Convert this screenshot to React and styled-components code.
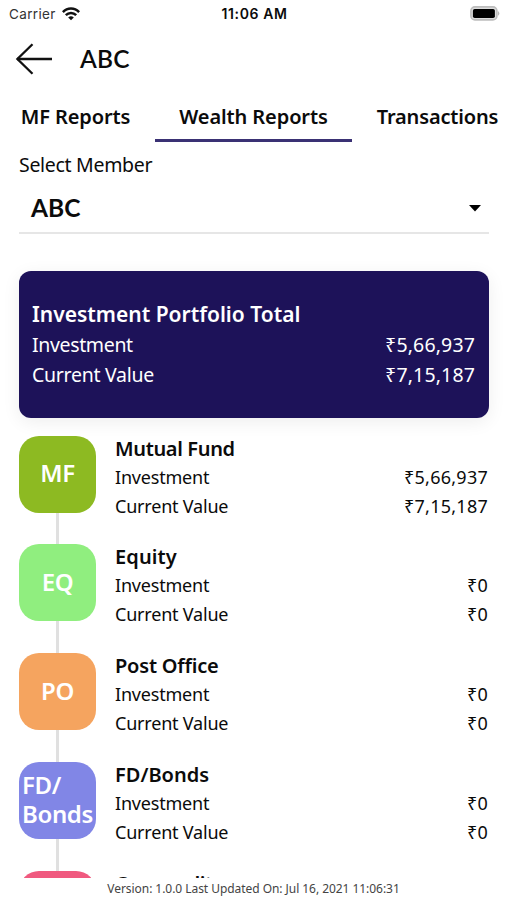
import React from 'react';
import styled, { createGlobalStyle } from 'styled-components';

const GlobalStyle = createGlobalStyle`
  *, *::before, *::after { box-sizing: border-box; }
  body { margin: 0; background: #fff; }
`;

const Screen = styled.main`
  width: 507px;
  height: 900px;
  display: flex;
  flex-direction: column;
  overflow: hidden;
  background: #fff;
  color: #0b0b0b;
  font-family: 'Noto Sans', 'Open Sans', sans-serif;
`;

const Text = styled.span`
  display: block;
  white-space: pre;
  font-size: ${(p) => p.$size}px;
  font-weight: ${(p) => p.$weight || 400};
  letter-spacing: ${(p) => p.$track || 0}px;
  line-height: ${(p) => p.$line}px;
`;

const StatusBar = styled.header`
  height: 28px;
  flex: none;
  display: grid;
  grid-template-columns: 1fr auto 1fr;
  align-items: center;
  padding: 0 7px 1px 9px;
  font-family: Inter, sans-serif;
`;

const Carrier = styled.div`
  display: flex;
  align-items: center;
  gap: 6px;
  color: #333;
`;

const BatteryIcon = styled.svg`
  justify-self: end;
`;

const TitleBar = styled.div`
  height: 62px;
  flex: none;
  display: flex;
  align-items: center;
  gap: 27px;
  padding-left: 15px;
`;

const LatoText = styled(Text)`
  font-family: Lato, sans-serif;
`;

const Tabs = styled.nav`
  height: 52px;
  flex: none;
  display: flex;
  margin-left: -4px;
`;

const Tab = styled.button`
  flex: none;
  width: ${(p) => p.$width}px;
  display: flex;
  justify-content: center;
  padding: 13px 0 0;
  border: 0;
  border-bottom: 3px solid ${(p) => (p.$active ? '#3a3174' : 'transparent')};
  background: none;
  font: inherit;
  color: inherit;
`;

const Member = styled.section`
  flex: none;
  height: 92px;
  margin: 0 18px 0 19px;
  padding-top: 9px;
  border-bottom: 2px solid #e6e6e6;
`;

const Select = styled.div`
  display: flex;
  align-items: center;
  justify-content: space-between;
  padding: 14px 8px 0 12px;
`;

const TotalCard = styled.section`
  flex: none;
  height: 147px;
  margin: 36.5px 18px 0 19px;
  padding: 27px 14px 0 13px;
  border-radius: 12px;
  background: #1d1259;
  color: #fff;
  box-shadow: 0 4px 18px rgba(0, 0, 0, 0.07);
`;

const Row = styled.div`
  display: flex;
  justify-content: space-between;
`;

const List = styled.ul`
  flex: none;
  height: 442.3px;
  margin: 18.2px 0 0;
  padding: 0 19px;
  overflow: hidden;
  list-style: none;
`;

const Item = styled.li`
  display: grid;
  grid-template-columns: 77px 1fr;
  column-gap: 19px;
  height: 108.75px;
`;

const Rail = styled.div`
  display: flex;
  flex-direction: column;
  align-items: center;
`;

const Details = styled.div`
  margin-top: -1.1px;
`;

const Badge = styled.div`
  flex: none;
  width: 77px;
  height: 77px;
  display: flex;
  align-items: center;
  justify-content: center;
  padding-bottom: 3px;
  border-radius: 20px;
  background: ${(p) => p.$color};
  color: #fff;
`;

const Connector = styled.div`
  flex: 1;
  width: 3px;
  background: #e0e0e0;
`;

const Footer = styled.footer`
  flex: 1;
  display: flex;
  justify-content: center;
  padding-top: 1px;
  color: #444;
`;

const holdings = [
  { code: 'MF', color: '#8dba22', name: 'Mutual Fund', track: -0.35, invested: '₹5,66,937', value: '₹7,15,187' },
  { code: 'EQ', color: '#90ee7f', name: 'Equity', track: 0.1, invested: '₹0', value: '₹0' },
  { code: 'PO', color: '#f5a45f', name: 'Post Office', track: -0.2, invested: '₹0', value: '₹0' },
  { code: 'FD/\nBonds', color: '#8186e6', name: 'FD/Bonds', track: 0, invested: '₹0', value: '₹0' },
  { color: '#f0597f', name: 'Commodity', track: -0.6 },
];

const tabs = [
  { label: 'MF Reports', width: 159, track: -0.1 },
  { label: 'Wealth Reports', width: 197, track: -0.1, active: true },
  { label: 'Transactions', width: 171, track: -0.15 },
];

export default function App() {
  return (
    <Screen>
      <GlobalStyle />
      <StatusBar>
        <Carrier>
          <Text $size={13.5} $track={0.35} $line={20}>Carrier</Text>
          <svg width="18" height="14" viewBox="0 0 18 14" fill="none" stroke="#111" strokeWidth="2.5">
            <path d="M0.9 5.1 C5.4 0.2 12.6 0.2 17.1 5.1" />
            <path d="M3.8 8.2 C6.8 5.1 11.2 5.1 14.2 8.2" />
            <path d="M9 13.2 L6.2 10.4 Q9 8.2 11.8 10.4 Z" fill="#111" stroke="none" />
          </svg>
        </Carrier>
        <Text $size={14} $weight={600} $track={0.6} $line={20}>11:06 AM</Text>
        <BatteryIcon width="30" height="15" viewBox="0 0 30 15">
          <rect x="0.9" y="0.9" width="26" height="13" rx="4" fill="#ddd" stroke="#bdbdbd" strokeWidth="1.6" />
          <rect x="2.9" y="3" width="22" height="9" rx="1.8" fill="#000" />
          <path d="M28.2 5 Q30.4 7.4 28.2 9.8 Z" fill="#aaa" />
        </BatteryIcon>
      </StatusBar>
      <TitleBar>
        <svg width="38" height="32" viewBox="0 0 38 32" fill="none" stroke="#111" strokeWidth="2.3">
          <path d="M37 16 H2" />
          <path d="M17.5 1.2 L2.4 16 L17.5 30.8" />
        </svg>
        <LatoText $size={24.5} $weight={600} $track={0.2} $line={30}>ABC</LatoText>
      </TitleBar>
      <Tabs>
        {tabs.map((t) => (
          <Tab key={t.label} $width={t.width} $active={t.active}>
            <Text $size={20} $weight={600} $track={t.track} $line={28}>{t.label}</Text>
          </Tab>
        ))}
      </Tabs>
      <Member>
        <Text $size={19.5} $track={-0.3} $line={28}>Select Member</Text>
        <Select>
          <LatoText $size={24.5} $weight={700} $track={0.1} $line={30}>ABC</LatoText>
          <svg width="12" height="7" viewBox="0 0 12 7"><path d="M0 0 H12 L6 6.5 Z" fill="#000" /></svg>
        </Select>
      </Member>
      <TotalCard>
        <Text $size={21} $weight={600} $line={32}>Investment Portfolio Total</Text>
        <Row>
          <Text $size={19.5} $track={-0.35} $line={30}>Investment</Text>
          <Text $size={19.5} $track={0.15} $line={30}>₹5,66,937</Text>
        </Row>
        <Row>
          <Text $size={19.5} $track={-0.28} $line={30}>Current Value</Text>
          <Text $size={19.5} $track={0.15} $line={30}>₹7,15,187</Text>
        </Row>
      </TotalCard>
      <List>
        {holdings.map((h) => (
          <Item key={h.name}>
            <Rail>
              <Badge $color={h.color}>
                {h.code && <Text $size={24} $weight={600} $track={-0.4} $line={29}>{h.code}</Text>}
              </Badge>
              <Connector />
            </Rail>
            <Details>
              <Text $size={20} $weight={600} $track={h.track} $line={28}>{h.name}</Text>
              {h.invested && (
                <>
                  <Row>
                    <Text $size={18} $track={-0.2} $line={29}>Investment</Text>
                    <Text $size={18} $track={0.25} $line={29}>{h.invested}</Text>
                  </Row>
                  <Row>
                    <Text $size={18} $track={-0.2} $line={28}>Current Value</Text>
                    <Text $size={18} $track={0.25} $line={28}>{h.value}</Text>
                  </Row>
                </>
              )}
            </Details>
          </Item>
        ))}
      </List>
      <Footer>
        <Text $size={12} $track={-0.05} $line={20}>Version: 1.0.0 Last Updated On: Jul 16, 2021 11:06:31</Text>
      </Footer>
    </Screen>
  );
}
